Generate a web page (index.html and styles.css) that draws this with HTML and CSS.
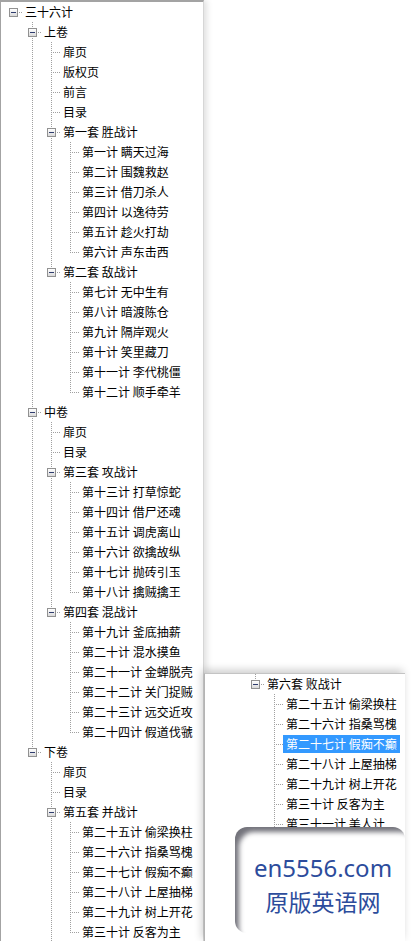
FILE: index.html
```html
<!DOCTYPE html>
<html lang="zh-CN">

<head>
    <meta charset="UTF-8">
    <meta name="viewport" content="width=device-width, initial-scale=1.0">
    <title>三十六计</title>
    <link rel="stylesheet" href="styles.css">
</head>

<body>
    <div class="tree">
        <div class="row"><span class="cell r"><i class="box"></i></span><span class="label">三十六计</span></div>
        <div class="row"><span class="cell"></span><span class="cell t"><i class="box"></i></span><span class="label">上卷</span></div>
        <div class="row"><span class="cell"></span><span class="cell v"></span><span class="cell t"></span><span class="label">扉页</span></div>
        <div class="row"><span class="cell"></span><span class="cell v"></span><span class="cell t"></span><span class="label">版权页</span></div>
        <div class="row"><span class="cell"></span><span class="cell v"></span><span class="cell t"></span><span class="label">前言</span></div>
        <div class="row"><span class="cell"></span><span class="cell v"></span><span class="cell t"></span><span class="label">目录</span></div>
        <div class="row"><span class="cell"></span><span class="cell v"></span><span class="cell t"><i class="box"></i></span><span class="label">第一套 胜战计</span></div>
        <div class="row"><span class="cell"></span><span class="cell v"></span><span class="cell v"></span><span class="cell t"></span><span class="label">第一计 瞒天过海</span></div>
        <div class="row"><span class="cell"></span><span class="cell v"></span><span class="cell v"></span><span class="cell t"></span><span class="label">第二计 围魏救赵</span></div>
        <div class="row"><span class="cell"></span><span class="cell v"></span><span class="cell v"></span><span class="cell t"></span><span class="label">第三计 借刀杀人</span></div>
        <div class="row"><span class="cell"></span><span class="cell v"></span><span class="cell v"></span><span class="cell t"></span><span class="label">第四计 以逸待劳</span></div>
        <div class="row"><span class="cell"></span><span class="cell v"></span><span class="cell v"></span><span class="cell t"></span><span class="label">第五计 趁火打劫</span></div>
        <div class="row"><span class="cell"></span><span class="cell v"></span><span class="cell v"></span><span class="cell l"></span><span class="label">第六计 声东击西</span></div>
        <div class="row"><span class="cell"></span><span class="cell v"></span><span class="cell l"><i class="box"></i></span><span class="label">第二套 敌战计</span></div>
        <div class="row"><span class="cell"></span><span class="cell v"></span><span class="cell"></span><span class="cell t"></span><span class="label">第七计 无中生有</span></div>
        <div class="row"><span class="cell"></span><span class="cell v"></span><span class="cell"></span><span class="cell t"></span><span class="label">第八计 暗渡陈仓</span></div>
        <div class="row"><span class="cell"></span><span class="cell v"></span><span class="cell"></span><span class="cell t"></span><span class="label">第九计 隔岸观火</span></div>
        <div class="row"><span class="cell"></span><span class="cell v"></span><span class="cell"></span><span class="cell t"></span><span class="label">第十计 笑里藏刀</span></div>
        <div class="row"><span class="cell"></span><span class="cell v"></span><span class="cell"></span><span class="cell t"></span><span class="label">第十一计 李代桃僵</span></div>
        <div class="row"><span class="cell"></span><span class="cell v"></span><span class="cell"></span><span class="cell l"></span><span class="label">第十二计 顺手牵羊</span></div>
        <div class="row"><span class="cell"></span><span class="cell t"><i class="box"></i></span><span class="label">中卷</span></div>
        <div class="row"><span class="cell"></span><span class="cell v"></span><span class="cell t"></span><span class="label">扉页</span></div>
        <div class="row"><span class="cell"></span><span class="cell v"></span><span class="cell t"></span><span class="label">目录</span></div>
        <div class="row"><span class="cell"></span><span class="cell v"></span><span class="cell t"><i class="box"></i></span><span class="label">第三套 攻战计</span></div>
        <div class="row"><span class="cell"></span><span class="cell v"></span><span class="cell v"></span><span class="cell t"></span><span class="label">第十三计 打草惊蛇</span></div>
        <div class="row"><span class="cell"></span><span class="cell v"></span><span class="cell v"></span><span class="cell t"></span><span class="label">第十四计 借尸还魂</span></div>
        <div class="row"><span class="cell"></span><span class="cell v"></span><span class="cell v"></span><span class="cell t"></span><span class="label">第十五计 调虎离山</span></div>
        <div class="row"><span class="cell"></span><span class="cell v"></span><span class="cell v"></span><span class="cell t"></span><span class="label">第十六计 欲擒故纵</span></div>
        <div class="row"><span class="cell"></span><span class="cell v"></span><span class="cell v"></span><span class="cell t"></span><span class="label">第十七计 抛砖引玉</span></div>
        <div class="row"><span class="cell"></span><span class="cell v"></span><span class="cell v"></span><span class="cell l"></span><span class="label">第十八计 擒贼擒王</span></div>
        <div class="row"><span class="cell"></span><span class="cell v"></span><span class="cell l"><i class="box"></i></span><span class="label">第四套 混战计</span></div>
        <div class="row"><span class="cell"></span><span class="cell v"></span><span class="cell"></span><span class="cell t"></span><span class="label">第十九计 釜底抽薪</span></div>
        <div class="row"><span class="cell"></span><span class="cell v"></span><span class="cell"></span><span class="cell t"></span><span class="label">第二十计 混水摸鱼</span></div>
        <div class="row"><span class="cell"></span><span class="cell v"></span><span class="cell"></span><span class="cell t"></span><span class="label">第二十一计 金蝉脱壳</span></div>
        <div class="row"><span class="cell"></span><span class="cell v"></span><span class="cell"></span><span class="cell t"></span><span class="label">第二十二计 关门捉贼</span></div>
        <div class="row"><span class="cell"></span><span class="cell v"></span><span class="cell"></span><span class="cell t"></span><span class="label">第二十三计 远交近攻</span></div>
        <div class="row"><span class="cell"></span><span class="cell v"></span><span class="cell"></span><span class="cell l"></span><span class="label">第二十四计 假道伐虢</span></div>
        <div class="row"><span class="cell"></span><span class="cell l"><i class="box"></i></span><span class="label">下卷</span></div>
        <div class="row"><span class="cell"></span><span class="cell"></span><span class="cell t"></span><span class="label">扉页</span></div>
        <div class="row"><span class="cell"></span><span class="cell"></span><span class="cell t"></span><span class="label">目录</span></div>
        <div class="row"><span class="cell"></span><span class="cell"></span><span class="cell t"><i class="box"></i></span><span class="label">第五套 并战计</span></div>
        <div class="row"><span class="cell"></span><span class="cell"></span><span class="cell v"></span><span class="cell t"></span><span class="label">第二十五计 偷梁换柱</span></div>
        <div class="row"><span class="cell"></span><span class="cell"></span><span class="cell v"></span><span class="cell t"></span><span class="label">第二十六计 指桑骂槐</span></div>
        <div class="row"><span class="cell"></span><span class="cell"></span><span class="cell v"></span><span class="cell t"></span><span class="label">第二十七计 假痴不癫</span></div>
        <div class="row"><span class="cell"></span><span class="cell"></span><span class="cell v"></span><span class="cell t"></span><span class="label">第二十八计 上屋抽梯</span></div>
        <div class="row"><span class="cell"></span><span class="cell"></span><span class="cell v"></span><span class="cell t"></span><span class="label">第二十九计 树上开花</span></div>
        <div class="row"><span class="cell"></span><span class="cell"></span><span class="cell v"></span><span class="cell l"></span><span class="label">第三十计 反客为主</span></div>
    </div>

    <!-- second capture, scrolled further down -->
    <div class="popup">
        <div class="row"><span class="cell"></span><span class="cell"></span><span class="cell l"><i class="box"></i></span><span class="label">第六套 败战计</span></div>
        <div class="row"><span class="cell"></span><span class="cell"></span><span class="cell"></span><span class="cell t"></span><span class="label">第二十五计 偷梁换柱</span></div>
        <div class="row"><span class="cell"></span><span class="cell"></span><span class="cell"></span><span class="cell t"></span><span class="label">第二十六计 指桑骂槐</span></div>
        <div class="row"><span class="cell"></span><span class="cell"></span><span class="cell"></span><span class="cell t"></span><span class="label sel">第二十七计 假痴不癫</span></div>
        <div class="row"><span class="cell"></span><span class="cell"></span><span class="cell"></span><span class="cell t"></span><span class="label">第二十八计 上屋抽梯</span></div>
        <div class="row"><span class="cell"></span><span class="cell"></span><span class="cell"></span><span class="cell t"></span><span class="label">第二十九计 树上开花</span></div>
        <div class="row"><span class="cell"></span><span class="cell"></span><span class="cell"></span><span class="cell t"></span><span class="label">第三十计 反客为主</span></div>
        <div class="row"><span class="cell"></span><span class="cell"></span><span class="cell"></span><span class="cell t"></span><span class="label">第三十一计 美人计</span></div>
    </div>

    <div class="mark">
        <span class="mark-url">en5556.com</span>
        <span class="mark-name">原版英语网</span>
    </div>
</body>

</html>
```

FILE: styles.css
```css
body {
    margin: 0;
    padding: 0;
    background-color: #fff;
    font-family: "Noto Sans CJK SC", "Noto Sans", sans-serif;
    font-size: 12px;
    color: #000;
    height: 941px;
    overflow: hidden;
}

.tree {
    width: 199px;
    height: 939px;
    padding-left: 3px;
    border-top: 2px solid #a3a3a3;
    border-left: 1px solid #a3a3a3;
    border-right: 1px solid #d6d6d6;
    box-shadow: 3px 0 6px rgba(0, 0, 0, 0.12);
    overflow: hidden;
}

.row {
    display: flex;
    align-items: center;
    height: 20px;
    white-space: nowrap;
}

.cell {
    flex: none;
    width: 19px;
    height: 20px;
    background-repeat: no-repeat;
}

/* ancestor line */
.v {
    background-image: repeating-linear-gradient(to bottom, #a0a0a0 0 1px, transparent 1px 2px);
    background-size: 1px 20px;
    background-position: 9px 0;
}

/* sibling follows */
.t {
    background-image:
        repeating-linear-gradient(to right, #a0a0a0 0 1px, transparent 1px 2px),
        repeating-linear-gradient(to bottom, #a0a0a0 0 1px, transparent 1px 2px);
    background-size: 8px 1px, 1px 20px;
    background-position: 11px 10px, 9px 0;
}

/* last sibling */
.l {
    background-image:
        repeating-linear-gradient(to right, #a0a0a0 0 1px, transparent 1px 2px),
        repeating-linear-gradient(to bottom, #a0a0a0 0 1px, transparent 1px 2px);
    background-size: 8px 1px, 1px 11px;
    background-position: 11px 10px, 9px 0;
}

/* root */
.r {
    background-image: repeating-linear-gradient(to right, #a0a0a0 0 1px, transparent 1px 2px);
    background-size: 8px 1px;
    background-position: 11px 10px;
}

.box {
    display: block;
    width: 7px;
    height: 7px;
    margin: 6px 0 0 5px;
    border: 1px solid #919191;
    background:
        linear-gradient(#2f3d6e, #2f3d6e) 1px 3px / 5px 1px no-repeat,
        linear-gradient(#ffffff, #d9d9d9);
}

.label {
    height: 18px;
    line-height: 18px;
    margin-left: -1px;
    padding: 0 3px;
}

.sel {
    background-color: #3399ff;
    color: #fff;
}

.popup {
    position: absolute;
    left: 204px;
    top: 673px;
    width: 197px;
    height: 268px;
    padding-left: 3px;
    background-color: #fff;
    border-top: 1px solid #c4c4c4;
    border-left: 1px solid #b4b4b4;
    box-shadow: -2px -3px 8px rgba(0, 0, 0, 0.2);
    overflow: hidden;
}

.mark {
    position: absolute;
    left: 235px;
    top: 827px;
    width: 164px;
    height: 98px;
    padding: 8px 0 0 6px;
    border-radius: 12px;
    background-color: #fff;
    box-shadow: inset 7px 8px 5px -3px rgba(70, 70, 80, 0.75);
    display: flex;
    flex-direction: column;
    align-items: center;
    justify-content: center;
    gap: 5px;
    color: #2c4c9c;
}

.mark-url {
    font-family: "Noto Sans", sans-serif;
    font-size: 24px;
    line-height: 28px;
}

.mark-name {
    font-family: "Noto Sans CJK SC", sans-serif;
    font-size: 23px;
    line-height: 28px;
}
```
